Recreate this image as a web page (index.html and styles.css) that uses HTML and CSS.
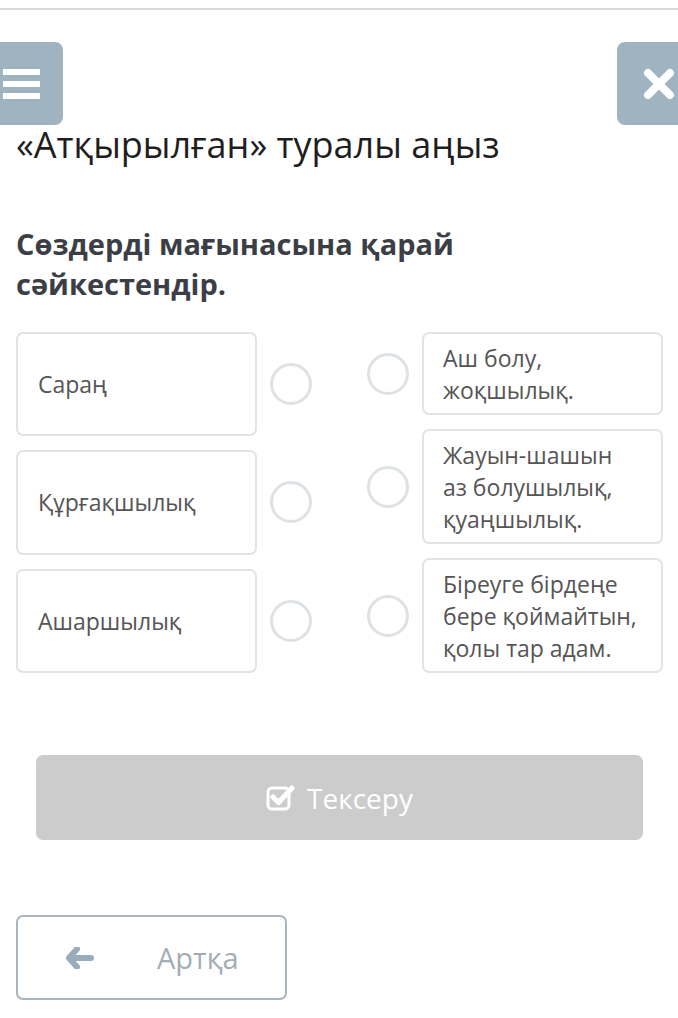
FILE: index.html
```html
<!DOCTYPE html>
<html lang="kk">
<head>
    <meta charset="UTF-8">
    <meta name="viewport" content="width=device-width, initial-scale=1.0">
    <title>«Атқырылған» туралы аңыз</title>
    <link rel="stylesheet" href="styles.css">
</head>
<body>
    <div class="topline"></div>

    <div class="toolbar">
        <button class="tool-btn menu-btn" aria-label="Menu">
            <span class="bar"></span>
            <span class="bar"></span>
            <span class="bar"></span>
        </button>
        <button class="tool-btn close-btn" aria-label="Close">
            <svg width="32" height="32" viewBox="0 0 32 32">
                <path d="M5 5 L27 27 M27 5 L5 27" stroke="#fff" stroke-width="8" stroke-linecap="round"/>
            </svg>
        </button>
    </div>

    <h1 class="title">«Атқырылған» туралы аңыз</h1>

    <h2 class="question">Сөздерді мағынасына қарай сәйкестендір.</h2>

    <div class="match">
        <div class="col col-left">
            <div class="item">
                <div class="card">Сараң</div>
                <span class="dot"></span>
            </div>
            <div class="item">
                <div class="card">Құрғақшылық</div>
                <span class="dot"></span>
            </div>
            <div class="item">
                <div class="card">Ашаршылық</div>
                <span class="dot"></span>
            </div>
        </div>
        <div class="col col-right">
            <div class="item">
                <span class="dot"></span>
                <div class="card">Аш болу, жоқшылық.</div>
            </div>
            <div class="item">
                <span class="dot"></span>
                <div class="card">Жауын-шашын аз болушылық, қуаңшылық.</div>
            </div>
            <div class="item">
                <span class="dot"></span>
                <div class="card">Біреуге бірдеңе бере қоймайтын, қолы тар адам.</div>
            </div>
        </div>
    </div>

    <button class="check-btn" disabled>
        <svg width="30" height="27" viewBox="0 0 30 27">
            <rect x="2" y="4" width="21" height="21" rx="4" fill="none" stroke="#fff" stroke-width="3"/>
            <path d="M7 13 L12.5 18.5 L26 4" fill="none" stroke="#fff" stroke-width="5" stroke-linecap="round" stroke-linejoin="round"/>
        </svg>
        <span>Тексеру</span>
    </button>

    <button class="back-btn">
        <svg width="28" height="22" viewBox="0 0 28 22">
            <path d="M11 2 L3 11 L11 20 M4 11 L25 11" fill="none" stroke="#98adbb" stroke-width="6" stroke-linecap="round" stroke-linejoin="round"/>
        </svg>
        <span>Артқа</span>
    </button>
</body>
</html>
```

FILE: styles.css
```css
body {
    font-family: "Open Sans", "Noto Sans", sans-serif;
    background-color: #ffffff;
    color: #222;
    margin: 0;
    overflow: hidden;
}

.topline {
    margin-top: 8px;
    height: 2px;
    background-color: #d9d9d9;
}

.toolbar {
    display: flex;
    justify-content: space-between;
    margin-top: 32px;
}

.tool-btn {
    width: 80px;
    height: 83px;
    border: none;
    border-radius: 8px;
    background-color: #9fb3c0;
    display: flex;
    align-items: center;
    padding: 0;
}

.menu-btn {
    margin-left: -17px;
    flex-direction: column;
    justify-content: center;
    gap: 6px;
    padding-left: 20px;
    align-items: flex-start;
}

.menu-btn .bar {
    display: block;
    width: 37px;
    height: 6px;
    background-color: #fff;
}

.close-btn {
    margin-right: -19px;
    padding-left: 26px;
}

.title {
    font-weight: 400;
    font-size: 36px;
    line-height: 40px;
    margin: 0 0 0 16px;
    color: #1e1e1e;
}

.question {
    font-weight: 700;
    font-size: 29px;
    line-height: 40px;
    color: #3b3f45;
    margin: 59px 16px 0 16px;
    max-width: 470px;
}

/* matching columns */
.match {
    display: grid;
    grid-template-columns: 1fr 1fr;
    gap: 0 55px;
    margin: 28px 15px 0 16px;
}

.col {
    display: flex;
    flex-direction: column;
    gap: 14px;
}

.col-left .item {
    flex: 1;
}

.item {
    display: flex;
    align-items: center;
    gap: 13px;
}

.card {
    flex: 1;
    align-self: stretch;
    display: flex;
    align-items: center;
    box-sizing: border-box;
    border: 2px solid #e3e3e3;
    border-radius: 7px;
    color: #555;
    font-size: 23px;
    line-height: 32px;
}

.col-left .card {
    padding: 20px 20px;
}

.col-right .card {
    padding: 8px 23px 7px 19px;
}

.dot {
    width: 42px;
    height: 42px;
    box-sizing: border-box;
    border: 3px solid #dee2e5;
    border-radius: 50%;
    flex-shrink: 0;
}

.check-btn {
    display: flex;
    justify-content: center;
    align-items: center;
    gap: 11px;
    width: calc(100% - 71px);
    height: 85px;
    margin: 82px 0 0 36px;
    border: none;
    border-radius: 7px;
    background-color: #cccccc;
    color: #fff;
    font-family: "Open Sans", "Noto Sans", sans-serif;
    font-size: 28px;
}

.back-btn {
    display: flex;
    align-items: center;
    width: 271px;
    height: 85px;
    margin: 75px 0 0 16px;
    padding: 0 0 0 48px;
    gap: 63px;
    background-color: #fff;
    border: 2px solid #a9b6be;
    border-radius: 7px;
    color: #a3adb5;
    font-family: "Open Sans", "Noto Sans", sans-serif;
    font-size: 29px;
}
```
